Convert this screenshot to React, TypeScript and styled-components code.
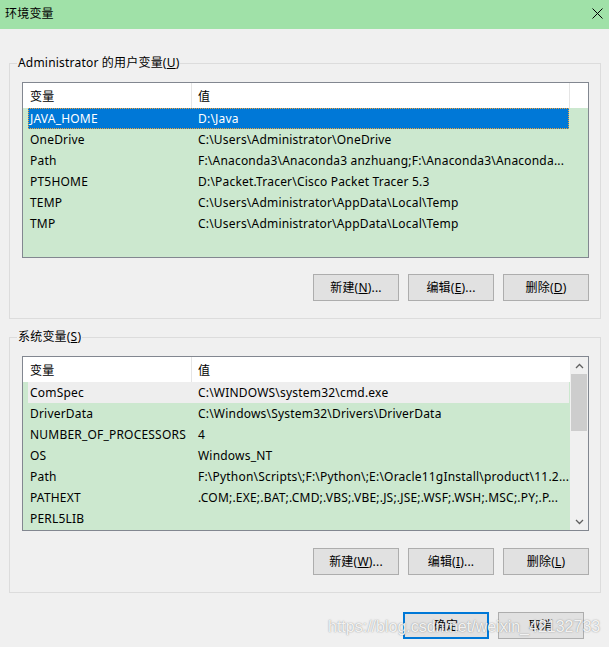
import React from "react";
import styled, { createGlobalStyle, css } from "styled-components";

const GlobalStyle = createGlobalStyle`
  html, body { margin: 0; padding: 0; background: #f0f0f0; }
  body {
    font-family: "Noto Sans", "Noto Sans CJK SC", sans-serif;
    font-size: 12px;
    letter-spacing: 0.2px;
    color: #000;
  }
`;

const Window = styled.div`
  position: relative;
  width: 609px;
  height: 647px;
  background: #f0f0f0;
  display: flex;
  flex-direction: column;
  overflow: hidden;
`;

const TitleBar = styled.div`
  height: 29px;
  flex: 0 0 29px;
  background: #a0e1a8;
  display: flex;
  align-items: center;
  justify-content: space-between;
  padding: 0 6px 2px 5px;
  box-sizing: border-box;
`;

const Title = styled.span`
  font-size: 12px;
  line-height: 16px;
`;

const CloseIcon = styled.svg`
  width: 11px;
  height: 11px;
`;

const Body = styled.div`
  display: flex;
  flex-direction: column;
  padding: 34px 8px 0 9px;
`;

const GroupBox = styled.div<{ $pt: number; $pb: number; $mb: number }>`
  position: relative;
  border: 1px solid #dcdcdc;
  padding: ${(p) => p.$pt}px 11px ${(p) => p.$pb}px 12px;
  margin-bottom: ${(p) => p.$mb}px;
  display: flex;
  flex-direction: column;
`;

const GroupTitle = styled.span`
  position: absolute;
  top: -9px;
  left: 7px;
  padding: 0 1px;
  background: #f0f0f0;
  line-height: 16px;
  white-space: nowrap;
`;

const ListView = styled.div<{ $height: number; $scroll: boolean }>`
  height: ${(p) => p.$height}px;
  box-sizing: border-box;
  border: 1px solid #828790;
  background: #cce8cf;
  display: grid;
  grid-template-columns: ${(p) => (p.$scroll ? "1fr 18px" : "1fr")};
  overflow: hidden;
`;

const ListMain = styled.div`
  display: flex;
  flex-direction: column;
  min-width: 0;
`;

const HeaderRow = styled.div`
  height: 25px;
  flex: 0 0 25px;
  background: #fff;
  display: grid;
  grid-template-columns: 169px 378px 1fr;
`;

const HeaderCell = styled.div<{ $pl: number; $divider?: boolean }>`
  display: flex;
  align-items: center;
  padding-left: ${(p) => p.$pl}px;
  padding-top: 1px;
  ${(p) =>
    p.$divider &&
    css`
      border-right: 1px solid #e5e5e5;
    `}
`;

const Rows = styled.div`
  display: flex;
  flex-direction: column;
  padding-left: 5px;
`;

const Row = styled.div<{ $state?: "selected" | "inactive" }>`
  width: 541px;
  height: 21px;
  box-sizing: border-box;
  display: grid;
  grid-template-columns: 163px 1fr;
  align-items: center;
  white-space: nowrap;
  ${(p) =>
    p.$state === "selected" &&
    css`
      background: #0078d7;
      color: #fff;
      outline: 1px dotted #f2a23a;
      outline-offset: -1px;
    `}
  ${(p) =>
    p.$state === "inactive" &&
    css`
      background: #eeeeee;
    `}
`;

const Cell = styled.span<{ $pl: number }>`
  padding-left: ${(p) => p.$pl}px;
  overflow: hidden;
  line-height: 16px;
  padding-top: 1px;
`;

const ScrollBar = styled.div`
  background: #f0f0f0;
  display: grid;
  grid-template-rows: 17px 1fr 17px;
  border-left: 1px solid #f0f0f0;
`;

const ScrollArrow = styled.div`
  display: flex;
  align-items: center;
  justify-content: center;
`;

const ScrollTrack = styled.div`
  display: flex;
  flex-direction: column;
`;

const ScrollThumb = styled.div`
  height: 57px;
  margin: 0 1px 0 0;
  background: #cdcdcd;
`;

const ButtonRow = styled.div<{ $mt: number }>`
  display: flex;
  justify-content: flex-end;
  gap: 9px;
  margin-top: ${(p) => p.$mt}px;
`;

const Button = styled.button<{ $default?: boolean }>`
  width: 86px;
  height: 27px;
  box-sizing: border-box;
  background: #e1e1e1;
  border: 1px solid #adadad;
  font-family: inherit;
  font-size: 12px;
  letter-spacing: 0.2px;
  color: #000;
  padding: 0 0 1px;
  margin: 0;
  ${(p) =>
    p.$default &&
    css`
      border: 2px solid #0078d7;
    `}
`;

const DialogButtons = styled.div`
  display: flex;
  justify-content: flex-end;
  gap: 9px;
  padding-right: 17px;
`;

const Watermark = styled.div`
  position: absolute;
  left: 328px;
  top: 617px;
  font-family: "Liberation Sans", Arial, sans-serif;
  font-size: 16px;
  letter-spacing: 0;
  line-height: 20px;
  color: rgba(255, 255, 255, 0.9);
  text-shadow: 0 0 1px rgba(90, 90, 90, 0.55), 0 0 2px rgba(120, 120, 120, 0.35);
  white-space: nowrap;
  pointer-events: none;
`;

type Item = { name: string; value: string; state?: "selected" | "inactive" };

const userVars: Item[] = [
  { name: "JAVA_HOME", value: "D:\\Java", state: "selected" },
  { name: "OneDrive", value: "C:\\Users\\Administrator\\OneDrive" },
  { name: "Path", value: "F:\\Anaconda3\\Anaconda3 anzhuang;F:\\Anaconda3\\Anaconda..." },
  { name: "PT5HOME", value: "D:\\Packet.Tracer\\Cisco Packet Tracer 5.3" },
  { name: "TEMP", value: "C:\\Users\\Administrator\\AppData\\Local\\Temp" },
  { name: "TMP", value: "C:\\Users\\Administrator\\AppData\\Local\\Temp" },
];

const systemVars: Item[] = [
  { name: "ComSpec", value: "C:\\WINDOWS\\system32\\cmd.exe", state: "inactive" },
  { name: "DriverData", value: "C:\\Windows\\System32\\Drivers\\DriverData" },
  { name: "NUMBER_OF_PROCESSORS", value: "4" },
  { name: "OS", value: "Windows_NT" },
  { name: "Path", value: "F:\\Python\\Scripts\\;F:\\Python\\;E:\\Oracle11gInstall\\product\\11.2..." },
  { name: "PATHEXT", value: ".COM;.EXE;.BAT;.CMD;.VBS;.VBE;.JS;.JSE;.WSF;.WSH;.MSC;.PY;.P..." },
  { name: "PERL5LIB", value: "" },
];

const Chevron = ({ up }: { up: boolean }) => (
  <svg width="9" height="6" viewBox="0 0 9 6">
    <path
      d={up ? "M1 5 L4.5 1.5 L8 5" : "M1 1 L4.5 4.5 L8 1"}
      fill="none"
      stroke="#606060"
      strokeWidth="1.3"
    />
  </svg>
);

function VarList({ items, height, scroll }: { items: Item[]; height: number; scroll: boolean }) {
  return (
    <ListView $height={height} $scroll={scroll}>
      <ListMain>
        <HeaderRow>
          <HeaderCell $pl={7} $divider>变量</HeaderCell>
          <HeaderCell $pl={6} $divider={!scroll}>值</HeaderCell>
          <HeaderCell $pl={0} />
        </HeaderRow>
        <Rows>
          {items.map((it) => (
            <Row key={it.name + it.value} $state={it.state}>
              <Cell $pl={2}>{it.name}</Cell>
              <Cell $pl={7}>{it.value}</Cell>
            </Row>
          ))}
        </Rows>
      </ListMain>
      {scroll && (
        <ScrollBar>
          <ScrollArrow>
            <Chevron up />
          </ScrollArrow>
          <ScrollTrack>
            <ScrollThumb />
          </ScrollTrack>
          <ScrollArrow>
            <Chevron up={false} />
          </ScrollArrow>
        </ScrollBar>
      )}
    </ListView>
  );
}

export default function App() {
  return (
    <>
      <GlobalStyle />
      <Window>
        <TitleBar>
          <Title>环境变量</Title>
          <CloseIcon viewBox="0 0 11 11">
            <path d="M0.5 0.5 L10.5 10.5 M10.5 0.5 L0.5 10.5" stroke="#000" strokeWidth="1" fill="none" />
          </CloseIcon>
        </TitleBar>
        <Body>
          <GroupBox $pt={18} $pb={17} $mb={18}>
            <GroupTitle>
              Administrator 的用户变量(<u>U</u>)
            </GroupTitle>
            <VarList items={userVars} height={176} scroll={false} />
            <ButtonRow $mt={16}>
              <Button>
                新建(<u>N</u>)...
              </Button>
              <Button>
                编辑(<u>E</u>)...
              </Button>
              <Button>
                删除(<u>D</u>)
              </Button>
            </ButtonRow>
          </GroupBox>
          <GroupBox $pt={18} $pb={17} $mb={19}>
            <GroupTitle>
              系统变量(<u>S</u>)
            </GroupTitle>
            <VarList items={systemVars} height={175} scroll />
            <ButtonRow $mt={17}>
              <Button>
                新建(<u>W</u>)...
              </Button>
              <Button>
                编辑(<u>I</u>)...
              </Button>
              <Button>
                删除(<u>L</u>)
              </Button>
            </ButtonRow>
          </GroupBox>
          <DialogButtons>
            <Button $default>确定</Button>
            <Button>取消</Button>
          </DialogButtons>
        </Body>
        <Watermark>https://blog.csdn.net/weixin_42132733</Watermark>
      </Window>
    </>
  );
}
